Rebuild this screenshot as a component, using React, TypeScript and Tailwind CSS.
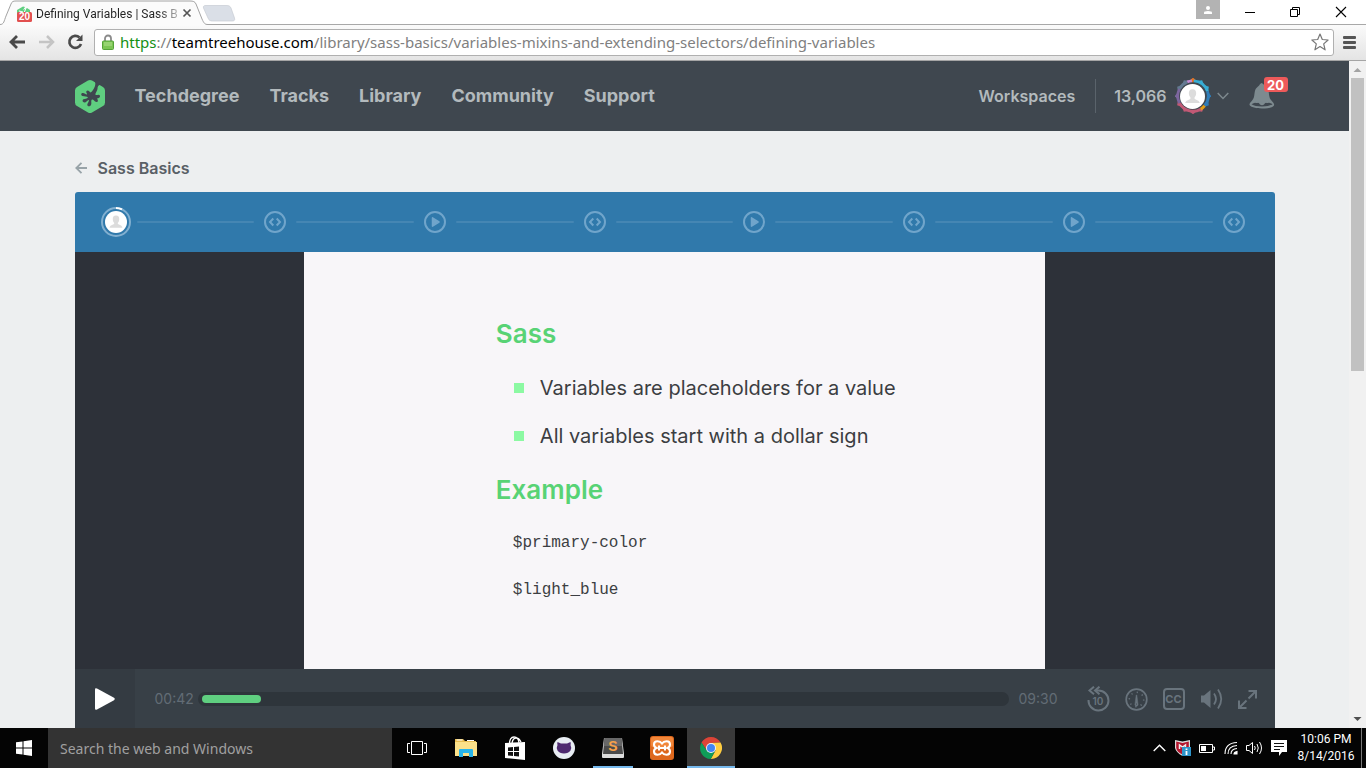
import type { ReactNode } from "react";

const ui = "font-['Noto_Sans','Open_Sans',sans-serif]";

function BrowserChrome() {
  return (
    <div className={`shrink-0 ${ui}`}>
      <div className="flex h-6 items-start bg-white">
        <div className="relative h-6 w-[240px] shrink-0">
          <svg className="absolute top-0 left-0 z-10" width="240" height="26" viewBox="0 0 240 26" fill="none" aria-hidden="true">
            <path d="M0 24.5C4 24.5 4 21 6 16L11 4C12 1.500 13 1 16 1H190C193 1 195 1.500 196 4L202 19C204 23.500 205 24.500 208 24.500V26H0Z" fill="#fbfbfb" />
            <path d="M0 24.5C4 24.500 4 21 6 16L11 4C12 1.500 13 1 16 1H190C193 1 195 1.500 196 4L202 19C204 23.500 205 24.500 208 24.500H240" stroke="#a3a3a3" />
            <path d="M206 5.500H226C229 5.500 230 6 231 8L234.500 18C235.200 20.500 234 21 232 21H213C210 21 209 20.500 208 18L203.500 8C203 6 204 5.500 206 5.500Z" fill="#dadfe7" stroke="#c7ccd3" strokeWidth=".7" />
            <path d="M183.500 9.500l7 7m0-7l-7 7" stroke="#555" strokeWidth="1.700" />
          </svg>
          <div className="relative z-20 flex h-6 items-center gap-1 pt-1 pl-4">
            <span className="relative block h-4 w-4">
              <svg width="16" height="16" viewBox="0 0 16 16" aria-hidden="true">
                <path d="M1 4L7 0.500L9 1L7 4L11 2L14 4V9H1Z" fill="#5fcf80" />
                <path d="M3 5l4 1m3-4-2 5" stroke="#fff" strokeWidth="1" />
                <rect x="1" y="6" width="15" height="10" rx="1.500" fill="#e2504f" />
              </svg>
              <span className="absolute top-[6px] left-[1px] w-[15px] text-center font-['Liberation_Sans',sans-serif] text-[10px] leading-[10px] font-bold text-white">20</span>
            </span>
            <span className="bg-linear-to-r from-[#222] from-85% to-[#bbb] bg-clip-text font-['Roboto',sans-serif] text-[12px] leading-4 whitespace-nowrap text-transparent">Defining Variables | Sass B</span>
          </div>
        </div>
        <div className="flex-1" />
        <button aria-label="Profile" className="flex h-[19px] w-6 items-center justify-center bg-[#b3b3b3]">
          <svg width="10" height="10" viewBox="0 0 10 10" fill="#fff"><circle cx="5" cy="3" r="2" /><path d="M1 9V7.500Q1 6 5 6T9 7.500V9Z" /></svg>
        </button>
        <div className="mr-px ml-[7px] flex h-6 text-black">
          <button aria-label="Minimize" className="flex w-[45px] items-center justify-center">
            <svg width="12" height="12" viewBox="0 0 12 12"><path d="M1 6.500h10" stroke="currentColor" /></svg>
          </button>
          <button aria-label="Restore" className="flex w-[45px] items-center justify-center">
            <svg width="12" height="12" viewBox="0 0 12 12" fill="none" stroke="currentColor"><path d="M1.500 3.500h7v7h-7zM3.500 3V1.500h7v7H9" /></svg>
          </button>
          <button aria-label="Close" className="flex w-12 items-center justify-center">
            <svg width="12" height="12" viewBox="0 0 12 12"><path d="M1 1l10 10M11 1L1 11" stroke="currentColor" strokeWidth="1.100" /></svg>
          </button>
        </div>
      </div>
      <div className="flex h-[37px] items-center border-b border-[#a5a5a5] bg-linear-to-b from-[#fbfbfb] to-[#e4e4e4] pr-[10px] pl-2 shadow-[inset_0_1px_0_#a8a8a8]">
        <div className="flex w-[86px] shrink-0 items-center gap-3">
          <button aria-label="Back">
            <svg width="18" height="16" viewBox="0 0 18 16" fill="none" stroke="#4a4a4a" strokeWidth="2.800"><path d="M17 8H4M9 2L3 8l6 6" /></svg>
          </button>
          <button aria-label="Forward">
            <svg width="17" height="16" viewBox="0 0 17 16" fill="none" stroke="#c4c4c4" strokeWidth="2.500"><path d="M1 8h12M9 2l6 6-6 6" /></svg>
          </button>
          <button aria-label="Reload">
            <svg width="16" height="16" viewBox="0 0 16 16"><path d="M12.500 3.500A6 6 0 1 0 14 10" fill="none" stroke="#4a4a4a" strokeWidth="2.700" /><path d="M15.500 0.500V7H9Z" fill="#4a4a4a" /></svg>
          </button>
        </div>
        <div className="flex h-[27px] min-w-0 flex-1 items-center rounded-[3px] border border-[#b0b0b0] bg-white pr-1 pl-[7px]">
          <svg width="12" height="16" viewBox="0 0 12 16" className="shrink-0" aria-hidden="true">
            <path d="M3 8V4.500a3 3 0 0 1 6 0V8" fill="none" stroke="#8a8a8a" strokeWidth="1.800" />
            <rect x=".5" y="7" width="11" height="8.500" rx="1" fill="#7cc654" stroke="#54a338" />
            <path d="M2 9h8M2 11h8" stroke="#b2e28f" />
          </svg>
          <div role="textbox" aria-label="Address" contentEditable suppressContentEditableWarning className="ml-[6px] min-w-0 flex-1 overflow-hidden text-[15px] leading-5 whitespace-nowrap text-[#808080] outline-none">
            <span className="text-[#149014]">https</span>://<span className="text-black">teamtreehouse.com</span>/library/sass-basics/variables-mixins-and-extending-selectors/defining-variables
          </div>
          <button aria-label="Bookmark">
            <svg width="18" height="18" viewBox="0 0 18 18" fill="none" stroke="#777" strokeWidth="1.200" strokeLinejoin="round"><path d="M9 1l2.300 5.500 5.800.5-4.400 3.900 1.400 5.900L9 13.600l-5.100 3.200 1.400-5.900L.9 7l5.800-.5z" /></svg>
          </button>
        </div>
        <button aria-label="Menu" className="ml-[9px] flex w-[13px] flex-col gap-[2px]">
          <span className="h-[3px] rounded-[1px] bg-[#555]" /><span className="h-[3px] rounded-[1px] bg-[#555]" /><span className="h-[3px] rounded-[1px] bg-[#555]" />
        </button>
      </div>
    </div>
  );
}

function Person({ size }: { size: number }) {
  return (
    <svg width={size} height={size} viewBox="0 0 24 24" aria-hidden="true">
      <circle cx="12" cy="12" r="12" fill="#fff" />
      <path d="M12 5c-2.700 0-3.700 1.800-3.500 4.200.1 1.700.7 2.700 1.500 3.600v1.500c-1.700 1-4.500 1.200-5 4h14c-.5-2.800-3.300-3-5-4v-1.500c.8-.9 1.400-1.900 1.500-3.600C15.700 6.800 14.700 5 12 5z" fill="#dcdcdc" />
    </svg>
  );
}

const badgeArcs = [
  { color: "#e67321", from: -4, to: 3 },
  { color: "#37add4", from: 3, to: 72 },
  { color: "#2f7db8", from: 72, to: 130 },
  { color: "#e59e13", from: 130, to: 150 },
  { color: "#c25975", from: 150, to: 242 },
  { color: "#7d669e", from: 242, to: 298 },
  { color: "#637a91", from: 298, to: 338 },
  { color: "#c38cd4", from: 338, to: 356 },
];

function Avatar() {
  const point = (deg: number) => {
    const a = ((deg - 90) * Math.PI) / 180;
    return `${18 + 15.2 * Math.cos(a)} ${18 + 15.2 * Math.sin(a)}`;
  };
  const teeth = Array.from({ length: 12 }, (_, i) => i * 30);
  return (
    <span className="relative flex h-9 w-9 items-center justify-center">
      <svg className="absolute inset-0" width="36" height="36" viewBox="0 0 36 36" aria-hidden="true">
        {teeth.map((deg) => (
          <path key={deg} d="M14 3L18 -.3L22 3Z" fill={badgeArcs.find((a) => deg >= a.from && deg < a.to)?.color} transform={`rotate(${deg} 18 18)`} />
        ))}
        {badgeArcs.map((a) => (
          <path key={a.color} d={`M${point(a.from)}A15.200 15.200 0 0 1 ${point(a.to)}`} fill="none" stroke={a.color} strokeWidth="2.800" />
        ))}
      </svg>
      <span className="relative"><Person size={25} /></span>
    </span>
  );
}

function SiteHeader() {
  const links = ["Techdegree", "Tracks", "Library", "Community", "Support"];
  return (
    <header className="h-[70px] bg-[#3f474f] text-[#b3babd]">
      <div className="mx-auto flex h-full max-w-[1200px] items-center">
        <a href="#home" aria-label="Treehouse" className="mr-[30px]">
          <svg width="30" height="33" viewBox="0 0 30 33">
            <path d="M13 .6Q15 -.4 17 .6L28 7Q30 8 30 10.500V22.500Q30 25 28 26L17 32.400Q15 33.400 13 32.400L2 26Q0 25 0 22.500V10.500Q0 8 2 7Z" fill="#5fcf80" />
            <path d="M19.500 1L25.500 4.500C23 5 22.500 7 22.500 9C22 11.500 20 13 20.500 15C22 15.500 23.500 14 25 15.500C25.500 17.500 23.500 18.500 22 18.500C23.500 20 23 22.500 21.500 22C19 21.500 18.500 19 17 19.500C15.500 20.500 17 23 16 25C15 27 12 26.500 12.300 24.500C12.500 23 14 22 14 20C12.500 19.500 11.500 22.500 9.500 22.500C7.500 22.500 7 20 8.500 19.300C10 18.600 12 19 13 17.500C12 16 9.500 16.500 7.500 16C5.500 15.300 6 12.500 8 13C9.500 13.300 10.500 14.500 12 14.500C12.500 13.500 10.500 12.500 11.500 11C13 9.500 14.500 11.500 15.500 12.500C17.500 11.500 19 8.500 20 6C20.500 4 20.500 2.500 19.500 1Z" fill="#3f474f" />
          </svg>
        </a>
        <nav className="flex gap-[30px] text-[18px] leading-6 font-bold">
          {links.map((l) => <a key={l} href={`#${l.toLowerCase()}`}>{l}</a>)}
        </nav>
        <div className="ml-auto flex items-center text-[16px] leading-6 font-semibold">
          <a href="#workspaces">Workspaces</a>
          <span className="mr-[18px] ml-5 h-[34px] w-px bg-[#5a636b]" />
          <button className="flex items-center">
            <span className="mr-2">13,066</span>
            <Avatar />
            <svg className="ml-[6px]" width="12" height="8" viewBox="0 0 12 8" fill="none" stroke="#7d888d" strokeWidth="1.500"><path d="M.7 1L6 6.500L11.300 1" /></svg>
          </button>
          <button aria-label="Notifications" className="relative ml-5 h-[26px] w-[26px]">
            <svg width="26" height="26" viewBox="0 0 26 26">
              <path d="M12.500 0C10.500 1 11 2 9 3.500C5 6.500 6 10 5 14C4.500 17 1 19 0.500 21C0 24 6 25.500 13 25.500S26 24 25 21C24.500 19 21 17 20.500 14C19.500 10 20.500 6.500 16.500 3.500C14.500 2 15 1 12.500 0Z" fill="#7d8a8f" />
              <path d="M2.500 21.300Q6 19 13 19T23.500 21.300Q20 23.500 13 23.500T2.500 21.300Z" fill="#3f474f" />
              <path d="M9 19Q13 18 17 19L15 21.500Q13 23 11 21.500Z" fill="#7d8a8f" />
              <path d="M5 18.500L20.500 18.500L19 20Q13 19 7 20Z" fill="#7d8a8f" />
            </svg>
            <span className="absolute -top-[6px] left-[15px] flex h-[15px] w-6 items-center justify-center rounded-[3px] bg-[#ed5a5a] text-[13px] leading-4 font-bold text-white">20</span>
          </button>
        </div>
      </div>
    </header>
  );
}

function Step({ kind }: { kind: "code" | "video" }) {
  return (
    <button aria-label={kind === "code" ? "Code challenge" : "Video"} className="flex w-[42px] shrink-0 justify-center">
      <svg width="22" height="22" viewBox="0 0 22 22" fill="none" stroke="#70a5cb" strokeWidth="2">
        <circle cx="11" cy="11" r="10" />
        {kind === "code" ? <path d="M9.300 7.500L6 11L9.300 14.500M12.700 7.500L16 11L12.700 14.500" /> : <path d="M8.500 6.800L15 11L8.500 15.200Z" fill="#70a5cb" strokeWidth="1.500" strokeLinejoin="round" />}
      </svg>
    </button>
  );
}

function Timeline() {
  const steps: ("code" | "video")[] = ["code", "video", "code", "video", "code", "video", "code"];
  return (
    <div className="flex h-[60px] items-center rounded-t-[3px] bg-[#3079ab] px-5">
      <button aria-label="Current step" className="relative flex w-[42px] shrink-0 items-center justify-center">
        <svg width="30" height="30" viewBox="0 0 30 30" fill="none" strokeWidth="2">
          <circle cx="15" cy="15" r="14" stroke="#83b0d0" /><path d="M15 1A14 14 0 0 1 21 2.400" stroke="#fff" />
        </svg>
        <span className="absolute"><Person size={22} /></span>
      </button>
      {steps.map((kind, i) => (
        <div key={i} className="flex flex-1 items-center">
          <span className="h-[2px] flex-1 rounded-full bg-[#4586b3]" />
          <Step kind={kind} />
        </div>
      ))}
    </div>
  );
}

function Slide() {
  return (
    <div className="flex h-[417px] justify-center bg-[#2d3139]">
      <article className="aspect-video h-full bg-[#f8f6f9] pt-[66px] pl-48 text-[#3c3e42]">
        <h2 className="text-[26px] leading-8 font-semibold text-[#58d375]">Sass</h2>
        <ul className="my-[14px] text-[20px] leading-[48px]">
          {["Variables are placeholders for a value", "All variables start with a dollar sign"].map((t) => (
            <li key={t} className="flex items-center gap-4 pl-[18px] whitespace-nowrap">
              <span className="h-[10px] w-[10px] bg-[#8cf9a3]" />{t}
            </li>
          ))}
        </ul>
        <h2 className="text-[26px] leading-8 font-semibold text-[#58d375]">Example</h2>
        <div className="mt-[14px] pl-[17px] font-['Liberation_Mono',monospace] text-[16px] leading-[47px]">
          <code className="block font-[inherit]">$primary-color</code>
          <code className="block font-[inherit]">$light_blue</code>
        </div>
      </article>
    </div>
  );
}

function PlayerControls() {
  const current = 42;
  const total = 570;
  return (
    <div className="flex h-[60px] items-center bg-[#384047] text-[14px] leading-5 text-[#626c75]">
      <button aria-label="Play" className="flex h-full w-[60px] items-center justify-center bg-[#343b42]">
        <svg width="20" height="22" viewBox="0 0 20 22" fill="#fff"><path d="M0 1.500Q0-.5 2 .5L19 9.800Q20.500 11 19 12.200L2 21.500Q0 22.500 0 20.500Z" /></svg>
      </button>
      <span className="ml-5 w-[43px]">00:42</span>
      <div className="relative flex h-[14px] flex-1 items-center rounded-full bg-[#2e353b] px-1">
        <div className="h-2 rounded-full bg-[#5fcf80]" style={{ width: `${(current / total) * 100}%` }} />
        <input type="range" aria-label="Seek" min={0} max={total} defaultValue={current} className="absolute inset-0 w-full opacity-0" />
      </div>
      <span className="ml-[10px] w-[39px]">09:30</span>
      <div className="mr-[18px] ml-[29px] flex items-center gap-[15px] text-[#69747d]">
        <button aria-label="Back 10 seconds" className="relative">
          <svg width="23" height="26" viewBox="0 0 23 26" fill="none" stroke="currentColor" strokeWidth="2">
            <path d="M1.500 14A10 10 0 1 0 11.500 4.500H9" /><path d="M7 .7L2.500 4.500L7 8.300M12.500 .7L8 4.500L12.500 8.300" />
          </svg>
          <span className="absolute inset-x-0 top-[9px] text-center text-[10px] leading-[12px] font-semibold">10</span>
        </button>
        <button aria-label="Playback speed">
          <svg width="23" height="23" viewBox="0 0 23 23" fill="none" stroke="currentColor" strokeWidth="1.700">
            <circle cx="11.500" cy="11.500" r="10.300" /><circle cx="11.500" cy="11.500" r="7.200" strokeDasharray="1.200 4.455" strokeWidth="1.500" />
            <path d="M11.200 7h.6l1.200 9a1.600 1.600 0 1 1-3 0Z" fill="currentColor" strokeWidth=".5" /><circle cx="11.500" cy="16" r=".6" fill="#384047" stroke="none" />
          </svg>
        </button>
        <button aria-label="Captions" className="flex h-[22px] w-[22px] items-center justify-center rounded-[4px] border-2 border-current text-[11px] leading-3 font-bold">CC</button>
        <button aria-label="Volume">
          <svg width="23" height="22" viewBox="0 0 23 22" fill="none" stroke="currentColor" strokeWidth="1.800">
            <path d="M1 7.500h3L10.500 2V20L4 14.500H1Z" fill="currentColor" stroke="none" /><path d="M14 5.500Q18 11 14 16.500M18 1.500Q24.500 11 18 20.500" />
          </svg>
        </button>
        <button aria-label="Full screen">
          <svg width="19" height="19" viewBox="0 0 19 19" fill="none" stroke="currentColor" strokeWidth="2"><path d="M10.500 1H18V8.500M18 1L10.500 8.500M1 10.500V18H8.500M1 18L8.500 10.500" /></svg>
        </button>
      </div>
    </div>
  );
}

function Scrollbar() {
  return (
    <div className="flex w-[17px] shrink-0 flex-col items-center bg-[#f1f1f1]" aria-hidden="true">
      <svg className="shrink-0" width="17" height="17" viewBox="0 0 17 17"><path d="M4.500 11L8.500 7L12.500 11Z" fill="#a3a3a3" /></svg>
      <div className="h-[44%] w-[13px] bg-[#c1c1c1]" />
      <svg className="mt-auto shrink-0" width="17" height="17" viewBox="0 0 17 17"><path d="M4.500 6L8.500 10L12.500 6Z" fill="#505050" /></svg>
    </div>
  );
}

function TaskItem({ label, children, active, running }: { label: string; children: ReactNode; active?: boolean; running?: boolean }) {
  return (
    <button aria-label={label} className={`relative flex h-10 w-12 items-center justify-center ${active ? "bg-[#3a3a3a]" : ""}`}>
      {children}
      {(active || running) && <span className={`absolute bottom-0 h-[2px] bg-[#76b9ed] ${active ? "w-12" : "w-10"}`} />}
    </button>
  );
}

function Taskbar() {
  return (
    <footer className={`flex h-10 shrink-0 items-center bg-[#040404] text-white ${ui}`}>
      <button aria-label="Start" className="flex h-10 w-12 items-center justify-center">
        <svg width="16" height="16" viewBox="0 0 16 16" fill="#fff"><path d="M0 2.300L6.500 1.400V7.500H0ZM7.500 1.200L16 0V7.500H7.500ZM0 8.500H6.500V14.600L0 13.700ZM7.500 8.500H16V16L7.500 14.800Z" /></svg>
      </button>
      <input aria-label="Search the web and Windows" placeholder="Search the web and Windows" className="h-10 w-[344px] bg-[#333333] px-3 text-[14px] leading-5 outline-none placeholder:text-[#a0a0a0]" />
      <div className="ml-px flex gap-px">
        <TaskItem label="Task view">
          <svg width="20" height="14" viewBox="0 0 20 14" fill="none" stroke="#fff"><path d="M4.500.5h11v13h-11zM3 2.500H.5v9H3M17 2.500h2.500v9H17" /></svg>
        </TaskItem>
        <TaskItem label="File Explorer">
          <svg width="22" height="18" viewBox="0 0 22 18"><path d="M0 0H8L10 2H21V17H0Z" fill="#e8bd50" /><path d="M0 3H22V17H0Z" fill="#fbe18a" /><path d="M1.500 1h6M12 1.500h7" stroke="#fff" /><path d="M4 18V11Q4 10 5 10H17Q18 10 18 11V18H14V14H8V18Z" fill="#28b5ea" /></svg>
        </TaskItem>
        <TaskItem label="Store">
          <svg width="22" height="24" viewBox="0 0 22 24"><path d="M5.500 8Q5.500 1 10 1T15 7M8 7Q9 2 12 2T17 6" fill="none" stroke="#fff" strokeWidth="1.300" /><path d="M1 7L21 6V24L1 22Z" fill="#fff" /><path d="M4 11.500L9 11V15H4ZM10 11L15 10.500V15H10ZM4 16H9V20L4 19.500ZM10 16H15V20.500L10 20Z" fill="#111" /></svg>
        </TaskItem>
        <TaskItem label="GitHub">
          <svg width="22" height="22" viewBox="0 0 22 22"><circle cx="11" cy="11" r="11" fill="#e8edf3" /><path d="M4.500 5L8 6.500H14L17.500 5Q18 7 17.500 8Q19 11 17.500 13.500Q15.500 16.500 11 16.500T4.500 13.500Q3 11 4.500 8Q4 7 4.500 5Z" fill="#4e2a70" /></svg>
        </TaskItem>
        <TaskItem label="Sublime Text" running>
          <span className="relative flex h-5 w-[22px] justify-center">
            <svg className="absolute inset-0" width="22" height="20" viewBox="0 0 22 20"><path d="M2 0H20L22 16V19Q22 20 21 20H1Q0 20 0 19V16Z" fill="#ddd" /><path d="M2.500 0H19.500L21 16H1Z" fill="#4b4b4b" /><path d="M2.500 0H19.500L20.200 8H1.800Z" fill="#686868" /></svg>
            <span className="relative font-['Liberation_Sans',sans-serif] text-[14px] leading-4 font-bold text-[#f6a14a]">S</span>
          </span>
        </TaskItem>
        <TaskItem label="XAMPP">
          <svg width="24" height="24" viewBox="0 0 24 24"><rect width="24" height="24" rx="3" fill="#dd681d" /><rect x="1" y="1" width="22" height="10" rx="2" fill="#f2873a" /><path d="M12 7.500Q10.500 5.300 7.500 5.300Q4 5.300 4 8.500Q4 11 6.500 12Q4 13 4 15.500Q4 18.700 7.500 18.700Q10.500 18.700 12 16.500Q13.500 18.700 16.500 18.700Q20 18.700 20 15.500Q20 13 17.500 12Q20 11 20 8.500Q20 5.300 16.500 5.300Q13.500 5.300 12 7.500ZM9 9.500V14.500M15 9.500V14.500M9 12H15" fill="none" stroke="#fff" strokeWidth="2.100" /></svg>
        </TaskItem>
        <TaskItem label="Chrome" active>
          <svg width="22" height="22" viewBox="0 0 22 22"><path d="M1.500 5.500A11 11 0 0 1 20.500 5.500L11 6L6.700 13.500Z" fill="#dc4437" /><path d="M20.500 5.500A11 11 0 0 1 10.800 22L15.500 13.500L11 6Z" fill="#ffcd40" /><path d="M1.500 5.500A11 11 0 0 0 10.800 22L15.300 13.500L6.700 13.500Z" fill="#0f9d58" /><circle cx="11" cy="11" r="5" fill="#f1f1f1" /><circle cx="11" cy="11" r="4" fill="#4285f4" /></svg>
        </TaskItem>
      </div>
      <div className="ml-auto flex items-center">
        <div className="flex items-center gap-2">
          <svg width="13" height="8" viewBox="0 0 13 8" fill="none" stroke="#fff" strokeWidth="1.400"><path d="M.7 7L6.500 1.200L12.300 7" /></svg>
          <svg className="ml-px" width="16" height="16" viewBox="0 0 16 16"><path d="M0 0L7.500 1.500L15 0V8Q14 12.500 7.500 16Q1 12.500 0 8Z" fill="#ddd" /><path d="M1.200 1.500L7.500 3L13.800 1.500V8Q13 12 7.500 14.500Q2 12 1.200 8Z" fill="#b5152d" /><path d="M4.500 9V5L7.500 7L10.500 5V9" fill="none" stroke="#eee" strokeWidth="1.500" /><rect x="7" y="7" width="9" height="9" fill="#2e95cb" /><path d="M11.500 8.500v1.500m0 1v4" stroke="#fff" strokeWidth="1.800" /></svg>
          <svg width="16" height="9" viewBox="0 0 16 9" fill="none" stroke="#fff"><path d="M.5.500H13.500V8.500H.5ZM14 3h1.500v3H14" /><path d="M2 2H7V7H2Z" fill="#fff" stroke="none" /></svg>
          <svg className="ml-px" width="14" height="14" viewBox="0 0 14 14" fill="none" stroke="#fff" strokeWidth="1.100"><path d="M1 13Q1 2 13 1.500M4 13Q4 5 13 4.500M7 13Q7 8 13 7.500" /><path d="M10 13Q10 11 13 10.500V13Z" fill="#fff" /></svg>
          <svg width="17" height="14" viewBox="0 0 17 14" fill="none" stroke="#fff"><path d="M.5 4.500H3L6.500 1.500V12.500L3 9.500H.5ZM8.500 5Q10 7 8.500 9M11 3Q13.500 7 11 11M13.500 1Q17.500 7 13.500 13" /></svg>
          <svg width="16" height="16" viewBox="0 0 16 16"><path d="M0 0H16V12H11L8 16V12H0Z" fill="#fff" /><path d="M3 3.500h10M3 6.500h10M3 9.500h6" stroke="#111" /></svg>
        </div>
        <div className="ml-[6px] w-[66px] text-center font-['Roboto',sans-serif] text-[12px] leading-[17px]">
          <div>10:06 PM</div>
          <div>8/14/2016</div>
        </div>
        <span className="mr-1 ml-[2px] h-10 w-px bg-[#777]" />
      </div>
    </footer>
  );
}

export default function App() {
  return (
    <div className="flex h-screen flex-col overflow-hidden font-['Inter',sans-serif]">
      <BrowserChrome />
      <div className="flex min-h-0 flex-1">
        <div className="min-w-0 flex-1 overflow-hidden bg-[#edeff0]">
          <SiteHeader />
          <main className="mx-auto max-w-[1200px]">
            <a href="#sass-basics" className="flex h-[61px] w-fit items-center gap-[11px] pt-[13px] text-[16px] leading-6 font-semibold text-[#596066]">
              <svg width="12" height="12" viewBox="0 0 12 12" fill="none" stroke="#98a3a8" strokeWidth="1.800"><path d="M12 6H1.500M6.500 .8L1.300 6L6.500 11.200" /></svg>
              Sass Basics
            </a>
            <Timeline />
            <Slide />
            <PlayerControls />
          </main>
        </div>
        <Scrollbar />
      </div>
      <Taskbar />
    </div>
  );
}
